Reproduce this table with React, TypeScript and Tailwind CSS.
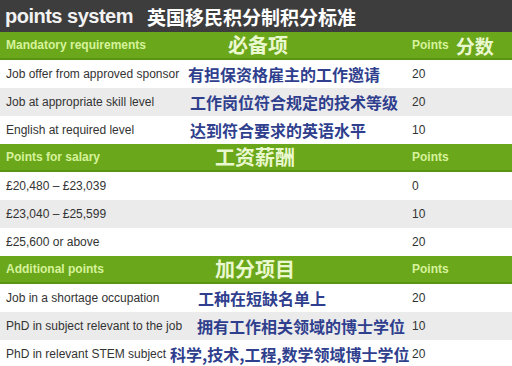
import React from 'react';

type Row = { en: string; zh: string; pts: string; cols: string; shade: boolean };
type Section = { title: string; zh: string; cols: string; ptsZh?: string; rows: Row[] };

const sections: Section[] = [
  {
    title: 'Mandatory requirements',
    zh: '必备项',
    cols: 'grid-cols-[222px_1fr]',
    ptsZh: '分数',
    rows: [
      { en: 'Job offer from approved sponsor', zh: '有担保资格雇主的工作邀请', pts: '20', cols: 'grid-cols-[182px_1fr]', shade: false },
      { en: 'Job at appropriate skill level', zh: '工作岗位符合规定的技术等级', pts: '20', cols: 'grid-cols-[184px_1fr]', shade: true },
      { en: 'English at required level', zh: '达到符合要求的英语水平', pts: '10', cols: 'grid-cols-[184px_1fr]', shade: false },
    ],
  },
  {
    title: 'Points for salary',
    zh: '工资薪酬',
    cols: 'grid-cols-[209px_1fr]',
    rows: [
      { en: '£20,480 – £23,039', zh: '', pts: '0', cols: 'grid-cols-[184px_1fr]', shade: false },
      { en: '£23,040 – £25,599', zh: '', pts: '10', cols: 'grid-cols-[184px_1fr]', shade: true },
      { en: '£25,600 or above', zh: '', pts: '20', cols: 'grid-cols-[184px_1fr]', shade: false },
    ],
  },
  {
    title: 'Additional points',
    zh: '加分项目',
    cols: 'grid-cols-[209px_1fr]',
    rows: [
      { en: 'Job in a shortage occupation', zh: '工种在短缺名单上', pts: '20', cols: 'grid-cols-[192px_1fr]', shade: false },
      { en: 'PhD in subject relevant to the job', zh: '拥有工作相关领域的博士学位', pts: '10', cols: 'grid-cols-[191px_1fr]', shade: true },
      { en: 'PhD in relevant STEM subject', zh: '科学,技术,工程,数学领域博士学位', pts: '20', cols: 'grid-cols-[164px_1fr]', shade: false },
    ],
  },
];

const en = "font-['Liberation_Sans',Arial,sans-serif]";
const zh = "font-['Noto_Sans_CJK_SC',sans-serif]";

export default function App() {
  return (
    <div className="w-[512px] h-[366px] overflow-hidden bg-white">
      {/* title bar */}
      <div className="h-[32px] bg-[#3d3d3d] flex items-center pl-[5px]">
        <span className={`${en} text-[20px] font-bold tracking-[-0.5px] text-[#f2f2f2] leading-none`}>points system</span>
        <span className={`${zh} text-[19px] font-bold text-white ml-[14px] leading-none`}>英国移民积分制积分标准</span>
      </div>

      {sections.map((s) => (
        <div key={s.title}>
          <div className="h-[28px] bg-[#6ba71b] border-b-2 border-[#5b9313] grid grid-cols-[406px_1fr] items-center pl-[6px]">
            <div className={`grid ${s.cols} items-center`}>
              <span className={`${en} text-[12px] font-bold text-[#d6f39c]`}>{s.title}</span>
              <span className={`${zh} text-[20px] font-bold text-[#eaf8cf] leading-none`}>{s.zh}</span>
            </div>
            <div className="flex items-center">
              <span className={`${en} text-[12px] font-bold text-[#d6f39c]`}>Points</span>
              {s.ptsZh && (
                <span className={`${zh} text-[19px] font-bold text-[#eaf8cf] leading-none ml-[7px]`}>{s.ptsZh}</span>
              )}
            </div>
          </div>
          {s.rows.map((r) => (
            <div
              key={r.en}
              className={`h-[28px] grid grid-cols-[406px_1fr] items-center pl-[6px] ${r.shade ? 'bg-[#ebebeb]' : 'bg-white'}`}
            >
              <div className={`grid ${r.cols} items-center`}>
                <span className={`${en} text-[12px] text-[#333333] whitespace-nowrap`}>{r.en}</span>
                <span className={`${zh} text-[16px] font-bold text-[#2f3f8e] leading-none whitespace-nowrap`}>{r.zh}</span>
              </div>
              <span className={`${en} text-[12px] text-[#333333]`}>{r.pts}</span>
            </div>
          ))}
        </div>
      ))}
    </div>
  );
}
